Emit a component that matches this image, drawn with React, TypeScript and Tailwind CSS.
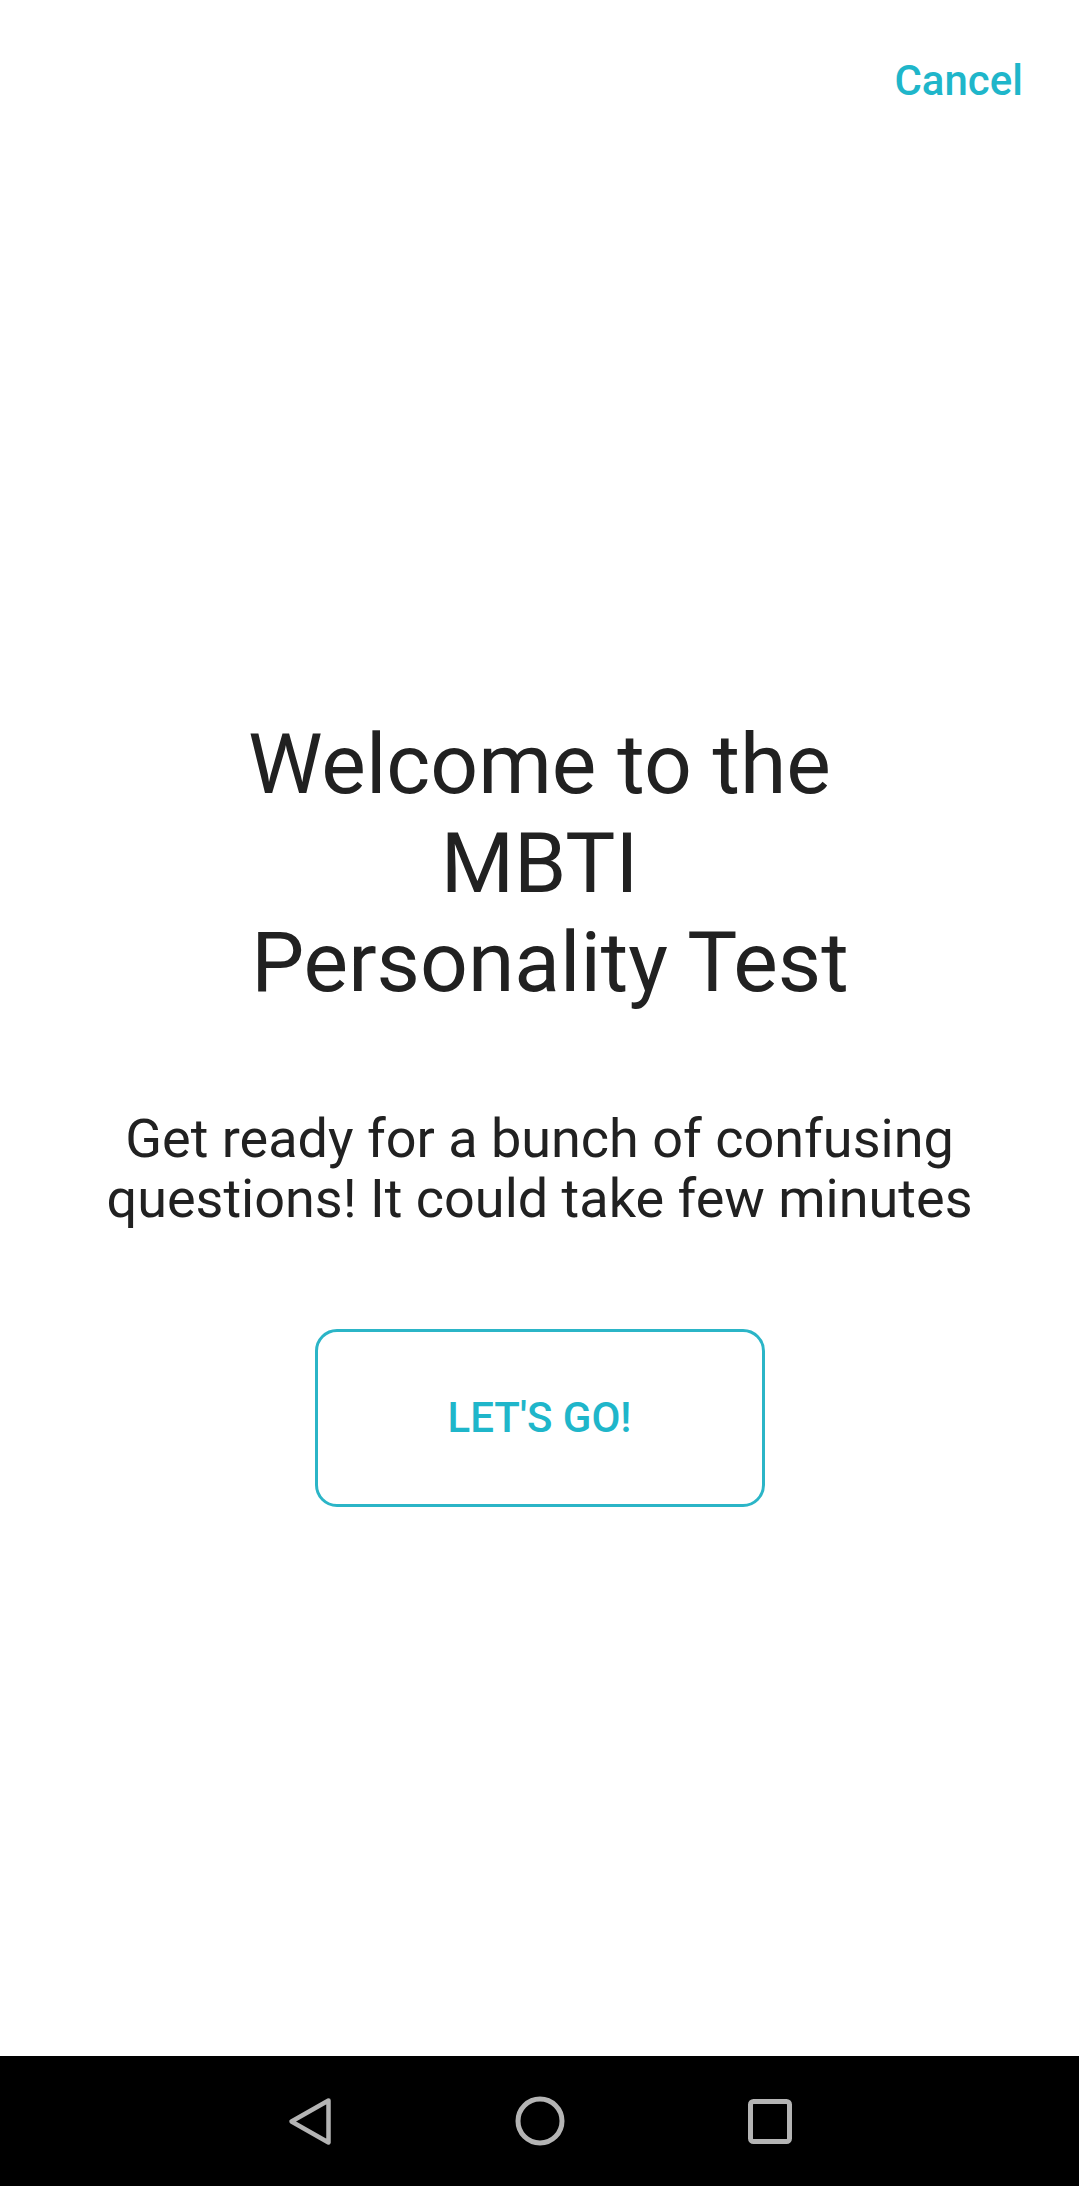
import React from "react";

export default function App() {
  return (
    <div
      className="w-[1079px] h-[2186px] flex flex-col bg-white overflow-hidden"
      style={{ fontFamily: "Roboto, 'Noto Sans', sans-serif" }}
    >
      <div className="flex-1 flex flex-col">
        <div className="flex justify-end pt-[57px] pr-[56px]">
          <span className="text-[42px] leading-[48px] font-medium text-[#1fb6ca]">
            Cancel
          </span>
        </div>

        <h1 className="mt-[610px] text-center text-[84px] leading-[99px] font-normal text-[#212121]">
          Welcome to the
          <br />
          MBTI
          <br />
          {"\u00a0"}Personality Test
        </h1>

        <p className="mt-[97px] text-center text-[54px] leading-[60px] text-[#212121]">
          Get ready for a bunch of confusing
          <br />
          questions! It could take few minutes
        </p>

        <div className="mt-[100px] flex justify-center">
          <button className="w-[450px] h-[178px] rounded-[22px] border-[3px] border-[#2bb5c7] bg-white flex items-center justify-center">
            <span className="text-[42px] leading-[48px] font-medium text-[#1fb6ca]">
              LET'S GO!
            </span>
          </button>
        </div>
      </div>

      <div className="h-[130px] bg-black flex items-center justify-center">
        <div className="w-[230px] flex justify-center">
          <svg width="48" height="52" viewBox="0 0 48 52" fill="none">
            <path
              d="M42.5 5.5 L5.5 26.5 L42.5 47.5 Z"
              stroke="#b4b4b4"
              strokeWidth="4.5"
              strokeLinejoin="round"
            />
          </svg>
        </div>
        <div className="w-[230px] flex justify-center">
          <svg width="50" height="50" viewBox="0 0 50 50" fill="none">
            <circle cx="25" cy="25" r="22" stroke="#b4b4b4" strokeWidth="5" />
          </svg>
        </div>
        <div className="w-[230px] flex justify-center">
          <svg width="44" height="45" viewBox="0 0 44 45" fill="none">
            <rect
              x="2.5"
              y="2.5"
              width="39"
              height="40"
              rx="3"
              stroke="#b4b4b4"
              strokeWidth="5"
            />
          </svg>
        </div>
      </div>
    </div>
  );
}
